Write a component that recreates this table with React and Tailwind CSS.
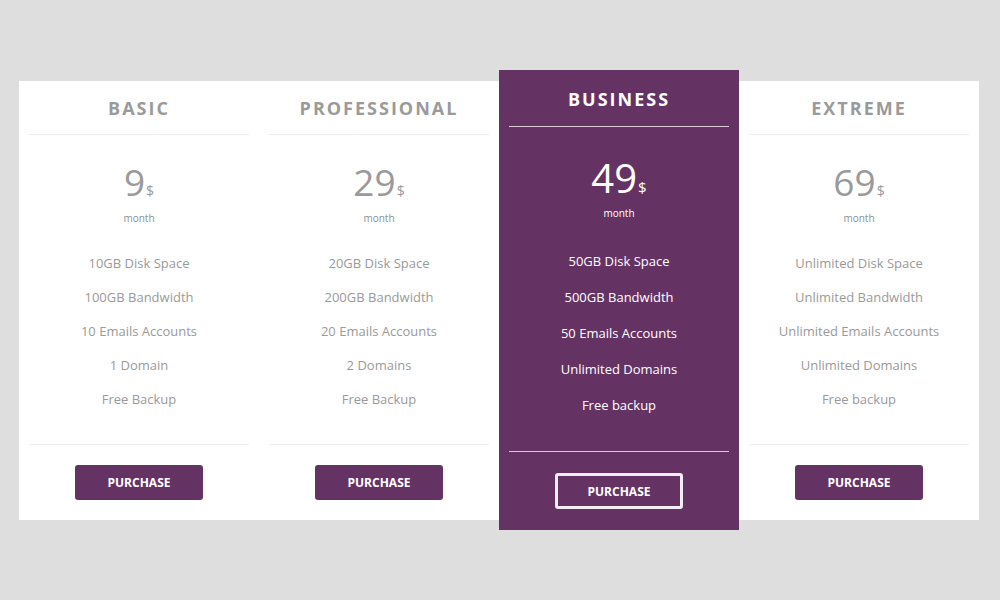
import React from 'react';

const plans = [
  {
    name: 'Basic',
    price: '9',
    features: ['10GB Disk Space', '100GB Bandwidth', '10 Emails Accounts', '1 Domain', 'Free Backup'],
  },
  {
    name: 'Professional',
    price: '29',
    features: ['20GB Disk Space', '200GB Bandwidth', '20 Emails Accounts', '2 Domains', 'Free Backup'],
  },
  {
    name: 'Business',
    price: '49',
    featured: true,
    features: ['50GB Disk Space', '500GB Bandwidth', '50 Emails Accounts', 'Unlimited Domains', 'Free backup'],
  },
  {
    name: 'Extreme',
    price: '69',
    features: [
      'Unlimited Disk Space',
      'Unlimited Bandwidth',
      'Unlimited Emails Accounts',
      'Unlimited Domains',
      'Free backup',
    ],
  },
];

const PlanCard = ({ plan }) => {
  if (plan.featured) {
    return (
      <div className="w-[240px] bg-[#653264] flex flex-col text-white">
        <div className="mx-[10px] h-[57px] pt-[2px] flex items-center justify-center border-b border-[#d9cbd8]">
          <h3 className="text-[18px] font-bold uppercase tracking-[2px] leading-none">{plan.name}</h3>
        </div>
        <div className="pt-[31px] flex justify-center items-baseline leading-none">
          <span className="text-[40px]">{plan.price}</span>
          <span className="text-[15px] ml-[1px]">$</span>
        </div>
        <div className="mt-[10px] text-[10px] leading-[10px] text-center">month</div>
        <ul className="mt-[26px] flex flex-col">
          {plan.features.map((f) => (
            <li key={f} className="h-[36px] flex items-center justify-center text-[13px]">
              {f}
            </li>
          ))}
        </ul>
        <div className="mx-[10px] mt-[27px] border-t border-[#d9cbd8]" />
        <div className="pt-[21px] pb-[21px] flex justify-center">
          <button className="w-[128px] h-[36px] pt-[1px] border-[3px] border-[#f3eef3] rounded-[3px] text-[12px] font-bold uppercase">
            Purchase
          </button>
        </div>
      </div>
    );
  }

  return (
    <div className="w-[240px] bg-white flex flex-col">
      <div className="mx-[10px] h-[54px] pt-[2px] flex items-center justify-center border-b border-[#eeeeee]">
        <h3 className="text-[18px] font-bold uppercase tracking-[2px] leading-none text-[#9a9a9a]">{plan.name}</h3>
      </div>
      <div className="pt-[28px] flex justify-center items-baseline leading-none text-[#9a9a9a]">
        <span className="text-[37px]">{plan.price}</span>
        <span className="text-[14px] ml-[1px]">$</span>
      </div>
      <div className="mt-[13px] text-[10px] leading-[10px] text-center text-[#8a9090]">month</div>
      <ul className="mt-[24px] flex flex-col">
        {plan.features.map((f) => (
          <li key={f} className="h-[34px] flex items-center justify-center text-[13px] text-[#9a9a9a]">
            {f}
          </li>
        ))}
      </ul>
      <div className="mx-[10px] mt-[27px] border-t border-[#eeeeee]" />
      <div className="pt-[20px] pb-[20px] flex justify-center">
        <button className="w-[128px] h-[35px] pt-[1px] bg-[#653264] rounded-[3px] text-[12px] font-bold uppercase text-white">
          Purchase
        </button>
      </div>
    </div>
  );
};

const App = () => {
  return (
    <div
      className="w-[1000px] h-[600px] bg-[#dedede] px-[19px] pt-[70px]"
      style={{ fontFamily: '"Open Sans", "Liberation Sans", sans-serif' }}
    >
      <div className="flex items-center">
        {plans.map((p) => (
          <PlanCard key={p.name} plan={p} />
        ))}
      </div>
    </div>
  );
};

export default App;
